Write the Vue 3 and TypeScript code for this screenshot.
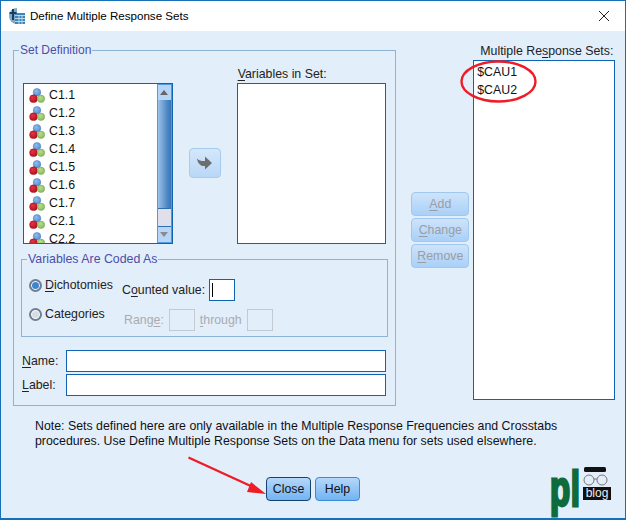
<script setup lang="ts">
const vars: string[] = ['C1.1', 'C1.2', 'C1.3', 'C1.4', 'C1.5', 'C1.6', 'C1.7', 'C2.1', 'C2.2']
</script>

<template>
  <div class="window">
    <svg class="defs" width="0" height="0" aria-hidden="true">
      <defs>
        <radialGradient id="gb" cx=".4" cy=".35" r=".7"><stop offset="0" stop-color="#8fbdf0" /><stop offset="1" stop-color="#4f8ad0" /></radialGradient>
        <radialGradient id="gr" cx=".4" cy=".35" r=".7"><stop offset="0" stop-color="#e8323f" /><stop offset="1" stop-color="#b0101f" /></radialGradient>
        <radialGradient id="gg" cx=".4" cy=".35" r=".7"><stop offset="0" stop-color="#b8dc8e" /><stop offset="1" stop-color="#86b85a" /></radialGradient>
      </defs>
    </svg>
    <header class="titlebar">
      <svg class="appicon" width="16" height="16" viewBox="0 0 16 16">
        <path d="M8 0a8 8 0 1 0 0 16z" fill="#7fa9c6" />
        <rect x="6" y="5" width="10" height="11" fill="#3f86b8" />
        <path d="M6 7.500h10M6 10.500h10M6 13.500h10M10 7v9M13 7v9" stroke="#d4e6f2" stroke-width=".8" />
        <path d="M4 1v11M0.500 5h7" stroke="#143f63" stroke-width="2" />
      </svg>
      <span class="title">Define Multiple Response Sets</span>
      <svg class="closex" width="12" height="12" viewBox="0 0 12 12">
        <path d="M1 1l10 10M11 1L1 11" stroke="#222" stroke-width="1" />
      </svg>
    </header>

    <main class="content">
      <div class="top">
        <fieldset class="setdef">
          <legend>Set Definition</legend>
          <div class="pickers">
            <div class="listbox">
              <ul class="vars">
                <li v-for="v in vars" :key="v">
                  <svg width="18" height="18" viewBox="0 0 18 18">
                    <circle cx="9" cy="6.300" r="3.800" fill="url(#gb)" stroke="#4a7cb5" stroke-width=".5" />
                    <circle cx="5.500" cy="12.700" r="3.900" fill="url(#gr)" stroke="#9c1522" stroke-width=".5" />
                    <circle cx="13" cy="12.800" r="3.700" fill="url(#gg)" stroke="#74a24d" stroke-width=".5" />
                  </svg>
                  <span>{{ v }}</span>
                </li>
              </ul>
              <div class="scrollbar">
                <div class="sbtn"><i class="up"></i></div>
                <div class="track"></div>
                <div class="thumb"></div>
                <div class="sbtn"><i class="down"></i></div>
              </div>
            </div>
            <button class="movebtn" type="button" aria-label="Move">
              <svg width="18" height="16" viewBox="0 0 18 16">
                <path d="M1 3.500c2 2 4.500 2.700 8 2.500V1.500L16 8l-7 6.500V11C5.500 11.500 2 9.500 1 3.500z" fill="#6e6e6e" />
              </svg>
            </button>
            <div class="setcol">
              <div class="collabel"><u>V</u>ariables in Set:</div>
              <div class="setbox"></div>
            </div>
          </div>

          <fieldset class="coded">
            <legend>Variables Are Coded As</legend>
            <div class="codedgrid">
              <label class="radio"><span class="dot on"></span><span><u>D</u>ichotomies</span></label>
              <div class="counted">
                <span>C<u>o</u>unted value:</span>
                <span class="smallbox active"><i class="caret"></i></span>
              </div>
              <label class="radio second"><span class="dot"></span><span>Cate<u>g</u>ories</span></label>
              <div class="range">
                <span>Rang<u>e</u>:</span>
                <span class="smallbox"></span>
                <span><u>t</u>hrough</span>
                <span class="smallbox"></span>
              </div>
            </div>
          </fieldset>

          <div class="fields">
            <label class="field"><span><u>N</u>ame:</span><span class="input"></span></label>
            <label class="field"><span><u>L</u>abel:</span><span class="input"></span></label>
          </div>
        </fieldset>

        <div class="actions">
          <button class="btn dis" type="button"><u>A</u>dd</button>
          <button class="btn dis" type="button"><u>C</u>hange</button>
          <button class="btn dis" type="button"><u>R</u>emove</button>
        </div>

        <div class="setscol">
          <div class="setslabel">Multiple Re<u>s</u>ponse Sets:</div>
          <div class="setsbox">
            <div>$CAU1</div>
            <div>$CAU2</div>
          </div>
        </div>
      </div>

      <p class="note">
        Note: Sets defined here are only available in the Multiple Response Frequencies and Crosstabs<br />
        procedures. Use Define Multiple Response Sets on the Data menu for sets used elsewhere.
      </p>

      <div class="footer">
        <button class="btn foot focus" type="button">Close</button>
        <button class="btn foot" type="button">Help</button>
      </div>
    </main>

    <div class="logo">
      <span class="logo-pl">pl</span>
      <div class="logo-side">
        <svg width="28" height="19" viewBox="0 0 28 19">
          <rect x="1" y="0" width="22" height="5" rx="1.500" fill="#111" />
          <circle cx="6" cy="13" r="5" fill="none" stroke="#777" stroke-width="1" />
          <circle cx="19" cy="13" r="5" fill="none" stroke="#777" stroke-width="1" />
          <path d="M11 12h3" stroke="#777" stroke-width="1" />
        </svg>
        <span class="logo-blog">blog</span>
      </div>
    </div>

    <svg class="marks" width="626" height="520" viewBox="0 0 626 520">
      <ellipse cx="498.500" cy="81.500" rx="37" ry="20" fill="none" stroke="#ee1c25" stroke-width="2.400" />
      <path d="M188.500 457.500L254 487.500" stroke="#ee1c25" stroke-width="2.400" />
      <path d="M266 494L247 492L251 482Z" fill="#ee1c25" />
    </svg>
  </div>
</template>

<style>
html, body { margin: 0; padding: 0; background: #e3eefb; }
</style>

<style scoped>
.window {
  position: relative;
  box-sizing: border-box;
  width: 626px;
  height: 520px;
  border: 1px solid #1670b8;
  border-width: 1px 1px 2px 1px;
  background: #e3eefb;
  font-family: "Liberation Sans", Arial, sans-serif;
  font-size: 12.350px;
  color: #1a1a1a;
  overflow: hidden;
}
.defs { position: absolute; }
u { text-underline-offset: 2px; }
.titlebar {
  box-sizing: border-box;
  height: 30px;
  background: #fff;
  display: flex;
  align-items: center;
  padding: 0 15px 1px 8px;
  gap: 5px;
}
.title { flex: 1; font-size: 11.600px; color: #000; }
.content { padding: 12px 10px 0 12px; }
.top { display: flex; align-items: flex-start; }
fieldset { margin: 0; min-width: 0; }
legend { padding: 0 1px; color: #4a4fa8; line-height: 14px; }
.setdef {
  box-sizing: border-box;
  width: 384px;
  height: 363px;
  border: 1px solid #8fb3d4;
  padding: 0 9px 0 9px;
}
.setdef > legend { margin-left: -4px; font-size: 12px; }
.pickers { display: flex; align-items: flex-start; height: 194px; }
.listbox {
  box-sizing: border-box;
  margin-top: 26px;
  width: 150px;
  height: 161px;
  border: 1px solid #0f63b5;
  background: #fff;
  display: flex;
  overflow: hidden;
}
.vars { list-style: none; margin: 0; padding: 2px 0 0 4px; flex: 1; overflow: hidden; }
.vars li { display: flex; align-items: center; height: 18px; gap: 3px; color: #111; }
.scrollbar {
  width: 15px;
  display: flex;
  flex-direction: column;
  border: 1px solid #4d9be0;
  box-sizing: border-box;
}
.sbtn { height: 15px; background: #b7d5f6; display: flex; align-items: center; justify-content: center; flex: none; }
.up { width: 0; height: 0; border: 4px solid transparent; border-top: 0; border-bottom: 5px solid #666; }
.down { width: 0; height: 0; border: 4px solid transparent; border-bottom: 0; border-top: 5px solid #8a8a8a; }
.track { flex: 1; background: linear-gradient(90deg, #9cc0e8, #4f89c4 70%, #3a74b4); }
.thumb { height: 19px; background: #dfe0ec; border-top: 1px solid #2e6fb0; border-bottom: 1px solid #2e6fb0; box-sizing: border-box; flex: none; }
.movebtn {
  box-sizing: border-box;
  width: 32px;
  height: 30px;
  margin: 91px 0 0 16px;
  border: 1px solid #a5cbef;
  border-radius: 4px;
  background: linear-gradient(#d5e7fa, #b9d7f7);
  display: flex;
  align-items: center;
  justify-content: center;
  padding: 0;
}
.setcol { margin-left: 16px; width: 150px; }
.collabel { line-height: 14px; padding: 10px 0 2px 1px; color: #222; }
.setbox { box-sizing: border-box; height: 161px; border: 1px solid #0f63b5; background: #fff; }
.coded {
  box-sizing: border-box;
  width: 367px;
  height: 85px;
  margin: 1px 0 0 -2px;
  padding: 0 0 0 7px;
  border: 1px solid #8fb3d4;
}
.coded > legend { margin-left: -2px; }
.codedgrid {
  display: grid;
  grid-template-columns: 93px 1fr;
  grid-template-rows: 30px 30px;
  padding-top: 7px;
}
.radio { display: flex; align-items: center; gap: 3px; height: 24px; color: #222; }
.radio.second { margin-top: -1px; }
.dot {
  box-sizing: border-box;
  width: 13px;
  height: 13px;
  border-radius: 50%;
  border: 2px solid #6f7f8e;
  background: #d5dde6;
  box-shadow: inset 0 0 0 1px #fff;
}
.dot.on { background: #3d86cf; }
.counted, .range { display: flex; align-items: center; height: 24px; margin-top: 5px; }
.counted { gap: 4px; color: #222; }
.range { gap: 5px; color: #a9abae; padding-left: 2px; }
.smallbox { box-sizing: border-box; width: 26px; height: 22px; border: 1px solid #c3cad1; display: inline-block; position: relative; }
.smallbox.active { border-color: #0f63b5; background: #fff; }
.caret { position: absolute; left: 2px; top: 3px; width: 1px; height: 14px; background: #000; }
.fields { display: flex; flex-direction: column; gap: 2px; margin: 13px 0 0 -1px; }
.field { display: flex; align-items: center; height: 22px; color: #222; }
.field > span:first-child { width: 44px; }
.input { box-sizing: border-box; width: 322px; height: 22px; background: #fff; border: 1px solid #0f63b5; }
.actions { display: flex; flex-direction: column; gap: 2px; width: 58px; margin: 149px 0 0 15px; }
.btn {
  box-sizing: border-box;
  height: 24px;
  border: 1px solid #86bbec;
  border-radius: 4px;
  background: linear-gradient(#cfe3fa, #a9d0f7);
  font: 12.350px "Liberation Sans", Arial, sans-serif;
  padding: 0;
  color: #222;
}
.btn.dis { color: #9a9ea4; border-color: #9fc8ee; }
.setscol { margin-left: 4px; width: 142px; display: flex; flex-direction: column; }
.setslabel { line-height: 14px; margin: 1px 0 2px 0; white-space: nowrap; padding-left: 7px; color: #222; }
.setsbox { box-sizing: border-box; height: 340px; border: 1px solid #0f63b5; background: #fff; padding: 2px 0 0 3px; line-height: 18px; color: #111; }
.note { margin: 13px 0 0 22px; line-height: 15px; color: #111; white-space: nowrap; }
.footer { display: flex; gap: 4px; margin: 28px 0 0 253px; }
.foot { width: 45px; height: 24px; background: linear-gradient(#b5d7fa, #72b4f2); border-color: #3a8ad6; color: #111; }
.foot.focus { border-color: #16406f; border-width: 1.500px; }
.logo {
  position: absolute;
  left: 549px;
  top: 466px;
  display: flex;
  align-items: flex-start;
}
.logo-pl {
  display: block;
  width: 33px;
  flex: none;
  font-weight: 700;
  font-size: 50px;
  line-height: 48px;
  height: 48px;
  color: #0e6b3b;
  -webkit-text-stroke: 3px #0e6b3b;
  letter-spacing: 1px;
  transform: translateY(-2px) scaleX(.66);
  transform-origin: left;
}
.logo-side { display: flex; flex-direction: column; width: 28px; }
.logo-side svg { display: block; }
.logo-blog {
  background: #111;
  color: #eee;
  font-size: 12px;
  line-height: 13px;
  text-align: center;
  margin-top: 1px;
}
.marks { position: absolute; left: -1px; top: -1px; pointer-events: none; }
</style>
